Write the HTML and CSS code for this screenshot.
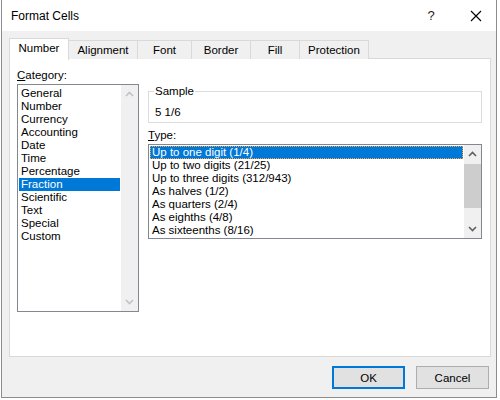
FILE: index.html
```html
<!DOCTYPE html>
<html>
<head>
<meta charset="utf-8">
<link rel="stylesheet" href="styles.css">
</head>
<body>
<div class="dialog">
  <div class="titlebar">
    <span class="title">Format Cells</span>
    <span class="help">?</span>
    <span class="close"><svg width="12" height="12" viewBox="0 0 12 12"><path d="M1 1L11 11M11 1L1 11" stroke="#000" stroke-width="1.1" fill="none"/></svg></span>
  </div>
  <div class="client">
    <div class="tabs">
      <div class="tab active">Number</div>
      <div class="tab">Alignment</div>
      <div class="tab">Font</div>
      <div class="tab">Border</div>
      <div class="tab">Fill</div>
      <div class="tab">Protection</div>
    </div>
    <div class="panel">
      <div class="leftcol">
        <div class="label"><u>C</u>ategory:</div>
        <div class="list catlist">
          <div class="items">
            <div class="item">General</div>
            <div class="item">Number</div>
            <div class="item">Currency</div>
            <div class="item">Accounting</div>
            <div class="item">Date</div>
            <div class="item">Time</div>
            <div class="item">Percentage</div>
            <div class="item sel">Fraction</div>
            <div class="item">Scientific</div>
            <div class="item">Text</div>
            <div class="item">Special</div>
            <div class="item">Custom</div>
          </div>
          <div class="scroll disabled">
            <svg class="arr" width="9" height="6" viewBox="0 0 9 6"><path d="M1 5L4.5 1.5L8 5" stroke="#c2c2c2" stroke-width="1.6" fill="none"/></svg>
            <div class="track"></div>
            <svg class="arr" width="9" height="6" viewBox="0 0 9 6"><path d="M1 1L4.5 4.5L8 1" stroke="#c2c2c2" stroke-width="1.6" fill="none"/></svg>
          </div>
        </div>
      </div>
      <div class="rightcol">
        <fieldset class="sample">
          <legend>Sample</legend>
          <div class="sampleval">5 1/6</div>
        </fieldset>
        <div class="label typelabel"><u>T</u>ype:</div>
        <div class="list typelist">
          <div class="items">
            <div class="item sel focus">Up to one digit (1/4)</div>
            <div class="item">Up to two digits (21/25)</div>
            <div class="item">Up to three digits (312/943)</div>
            <div class="item">As halves (1/2)</div>
            <div class="item">As quarters (2/4)</div>
            <div class="item">As eighths (4/8)</div>
            <div class="item">As sixteenths (8/16)</div>
          </div>
          <div class="scroll">
            <svg class="arr" width="9" height="6" viewBox="0 0 9 6"><path d="M1 5L4.5 1.5L8 5" stroke="#606060" stroke-width="1.6" fill="none"/></svg>
            <div class="track"><div class="thumb"></div></div>
            <svg class="arr" width="9" height="6" viewBox="0 0 9 6"><path d="M1 1L4.5 4.5L8 1" stroke="#606060" stroke-width="1.6" fill="none"/></svg>
          </div>
        </div>
      </div>
    </div>
    <div class="buttons">
      <div class="btn default">OK</div>
      <div class="btn">Cancel</div>
    </div>
  </div>
</div>
</body>
</html>
```
FILE: styles.css
```css
html, body {
  margin: 0;
  padding: 0;
  background: #ffffff;
}
body {
  font-family: "Liberation Sans", Arial, sans-serif;
  font-size: 11.5px;
  color: #000;
  width: 500px;
  height: 400px;
  overflow: hidden;
}
.dialog {
  margin-left: 1px;
  width: 496px;
  height: 398px;
  border: 1px solid #8c8c8c;
  border-top: none;
  box-sizing: border-box;
  display: flex;
  flex-direction: column;
  background: #f0f0f0;
}
.titlebar {
  height: 31px;
  background: #fff;
  display: flex;
  align-items: center;
  padding-left: 9px;
  flex: none;
}
.title {
  flex: 1;
  font-size: 12px;
}
.help {
  width: 14px;
  margin-right: 32px;
  font-size: 13px;
  text-align: center;
  color: #222;
}
.close {
  width: 12px;
  margin-right: 14px;
  display: flex;
}
.client {
  flex: 1;
  display: flex;
  flex-direction: column;
  padding: 7px 6px 0 7px;
}
.tabs {
  display: flex;
  align-items: flex-end;
  height: 21px;
  position: relative;
  z-index: 1;
  margin-bottom: -1px;
}
.tab {
  height: 19px;
  box-sizing: border-box;
  border: 1px solid #d9d9d9;
  border-bottom: none;
  margin-left: -1px;
  display: flex;
  align-items: center;
  justify-content: center;
  padding: 1px 0 0;
  background: #f0f0f0;
  line-height: 1;
  font-size: 11.5px;
}
.tab:first-child { margin-left: 0; }
.tab.active {
  height: 22px;
  background: #fff;
  padding: 0 0 2px;
  margin-bottom: -1px;
  z-index: 2;
  width: 60px;
}
.tab:nth-child(2) { width: 70px; }
.tab:nth-child(3) { width: 55px; }
.tab:nth-child(4) { width: 60px; }
.tab:nth-child(5) { width: 50px; }
.tab:nth-child(6) { width: 70px; }
.panel {
  height: 299px;
  box-sizing: border-box;
  background: #fff;
  border: 1px solid #d9d9d9;
  display: flex;
  padding: 9px 8px 0 7px;
  gap: 9px;
  width: 482px;
}
.label {
  line-height: 14px;
  height: 16px;
}
.leftcol {
  width: 122px;
  flex: none;
}
.list {
  border: 1px solid #828790;
  background: #fff;
  display: flex;
  box-sizing: border-box;
}
.catlist {
  height: 228px;
}
.items {
  flex: 1;
  padding: 1px 1px 0 1px;
}
.item {
  height: 13px;
  line-height: 13px;
  padding-left: 2px;
  white-space: nowrap;
  box-sizing: border-box;
}
.catlist .items { padding-top: 2px; }
.item.sel {
  background: #0078d7;
  color: #fff;
}
.item.focus {
  outline: 1px dotted #f7a53c;
  outline-offset: -1px;
}
.scroll {
  width: 17px;
  flex: none;
  background: #f0f0f0;
  display: flex;
  flex-direction: column;
  align-items: center;
}
.scroll .arr {
  flex: none;
  margin: 6px 0;
}
.track {
  flex: 1;
  width: 100%;
}
.thumb {
  height: 44px;
  background: #cdcdcd;
  margin-top: 1px;
}
.rightcol {
  flex: 1;
  padding-top: 16px;
}
.sample {
  margin: 0;
  padding: 0 5px 5px 5px;
  border: 1px solid #dcdcdc;
  width: 334px;
  box-sizing: border-box;
  height: 39px;
}
.sample legend {
  padding: 0 1px;
  line-height: 14px;
}
.sampleval {
  margin-top: 7px;
  line-height: 14px;
  padding-left: 1px;
}
.typelabel {
  margin-top: 5px;
}
.typelist {
  width: 334px;
  height: 95px;
}
.typelist .items { padding-top: 1px; }
.buttons {
  display: flex;
  justify-content: flex-end;
  gap: 11px;
  padding-top: 9px;
  padding-right: 1px;
}
.btn {
  width: 73px;
  height: 23px;
  box-sizing: border-box;
  border: 1px solid #adadad;
  background: #e1e1e1;
  display: flex;
  align-items: center;
  justify-content: center;
  font-size: 11.5px;
}
.btn.default {
  border: 2px solid #0078d7;
}
```
